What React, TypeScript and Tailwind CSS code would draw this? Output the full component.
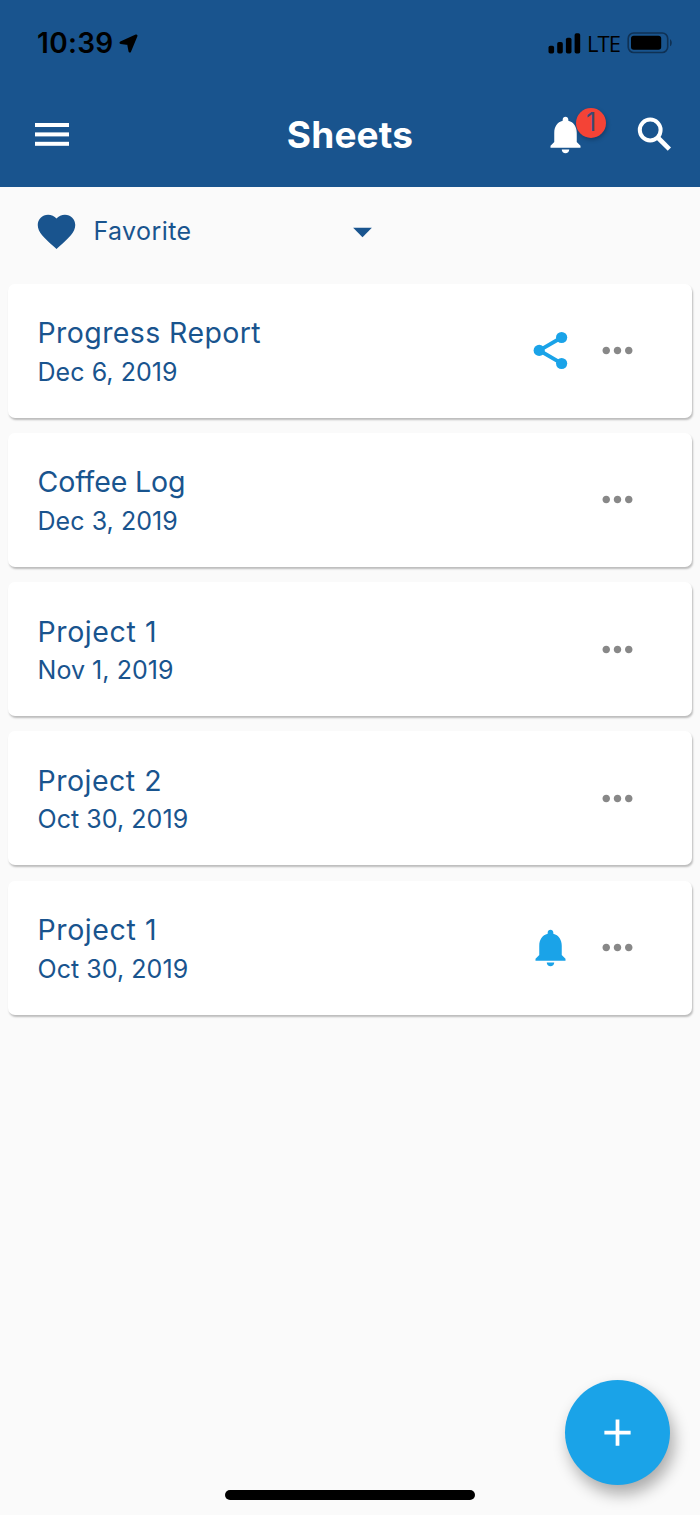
import React from "react";
import { MdAdd, MdArrowDropDown, MdFavorite, MdMoreHoriz } from "react-icons/md";

type Sheet = {
  title: string;
  date: string;
  status?: "shared" | "reminder";
  titleClass: string;
};

const sheets: Sheet[] = [
  { title: "Progress Report", date: "Dec 6, 2019", status: "shared", titleClass: "tracking-[0.4px]" },
  { title: "Coffee Log", date: "Dec 3, 2019", titleClass: "tracking-[-0.1px]" },
  { title: "Project 1", date: "Nov 1, 2019", titleClass: "tracking-[0.6px]" },
  { title: "Project 2", date: "Oct 30, 2019", titleClass: "tracking-[0.5px]" },
  { title: "Project 1", date: "Oct 30, 2019", status: "reminder", titleClass: "tracking-[0.6px]" },
];

function BellIcon({ className }: { className?: string }) {
  return (
    <svg viewBox="0 0 24 24" className={className} fill="currentColor">
      <path d="M12 22c1.1 0 2-.9 2-2h-4c0 1.1.89 2 2 2zm6-6v-5c0-3.07-1.64-5.64-4.5-6.32V4c0-.83-.67-1.5-1.5-1.5s-1.5.67-1.5 1.5v.68C7.63 5.36 6 7.92 6 11v5l-2 2v1h16v-1l-2-2z" />
    </svg>
  );
}

function ShareIcon({ className }: { className?: string }) {
  return (
    <svg viewBox="0 0 45 45" className={className} fill="currentColor">
      <path d="M33.6 9.5 11.4 22.4l22.2 13" fill="none" stroke="currentColor" strokeWidth="3.9" />
      <circle cx="11.2" cy="22.4" r="5.6" />
      <circle cx="33.6" cy="9.5" r="5.6" />
      <circle cx="33.6" cy="35.5" r="5.6" />
    </svg>
  );
}

function SearchIcon({ className }: { className?: string }) {
  return (
    <svg viewBox="0 0 45 45" className={className} fill="none" stroke="currentColor">
      <circle cx="18.2" cy="18" r="10.4" strokeWidth="4" />
      <path d="M25.7 25.5 37.4 37.2" strokeWidth="4.6" />
    </svg>
  );
}

function MenuIcon({ className }: { className?: string }) {
  return (
    <svg viewBox="0 0 34 23" className={className} fill="currentColor">
      <rect width="34" height="4" />
      <rect y="9.4" width="34" height="4" />
      <rect y="18.8" width="34" height="4" />
    </svg>
  );
}

function StatusBar() {
  return (
    <div className="flex h-[86px] items-center justify-between pl-[37px] pr-[27px] text-black">
      <div className="flex items-center">
        <span className="w-[82px] whitespace-nowrap text-[28px] font-semibold leading-none tracking-[0.3px]">10:39</span>
        <svg viewBox="0 0 19 19" className="h-[19px] w-[19px]" fill="currentColor">
          <path
            d="M1.8 8.6 17.2 1.8 10.8 17.2 9.4 9.8z"
            stroke="currentColor"
            strokeWidth="2.6"
            strokeLinejoin="round"
          />
        </svg>
      </div>
      <div className="flex items-center">
        <svg viewBox="0 0 33 21" className="mr-[6px] h-[21px] w-[33px]" fill="currentColor">
          <rect x="0.5" y="12.8" width="5.6" height="7.7" rx="1.8" />
          <rect x="9.2" y="9" width="5.6" height="11.5" rx="1.8" />
          <rect x="17.9" y="4.7" width="5.6" height="15.8" rx="1.8" />
          <rect x="26.6" y="0.3" width="5.6" height="20.2" rx="1.8" />
        </svg>
        <span className="mr-[7px] w-[33px] whitespace-nowrap pb-px font-['Open_Sans',sans-serif] text-[22px] font-medium leading-none tracking-[-0.9px]">LTE</span>
        <svg viewBox="0 0 46 22" className="h-[22px] w-[46px]">
          <rect x="1.2" y="1" width="39.5" height="19.5" rx="5.5" fill="none" stroke="#0f3154" strokeWidth="1.6" />
          <rect x="4" y="3.8" width="30.2" height="14" rx="2.8" fill="#000" />
          <path d="M43 7.2c2.4 1 2.4 6 0 7z" fill="#0f3154" />
        </svg>
      </div>
    </div>
  );
}

function Toolbar() {
  return (
    <div className="grid h-[98px] grid-cols-[1fr_auto_1fr] items-center pb-[2px] text-white">
      <MenuIcon className="ml-[35px] h-[23px] w-[34px]" />
      <h1 className="text-[37px] font-bold leading-none tracking-[0.2px]">Sheets</h1>
      <div className="flex items-center justify-end pr-[23px]">
        <div className="relative mr-[44px]">
          <BellIcon className="size-[45px]" />
          <span className="absolute left-[33px] top-[-4px] flex size-[30px] items-center justify-center rounded-full bg-[#f44336] text-[25px] leading-none text-[#3c4a75] shadow-[1px_2px_4px_rgba(0,0,0,0.25)]">
            1
          </span>
        </div>
        <SearchIcon className="size-[45px]" />
      </div>
    </div>
  );
}

function FilterBar() {
  return (
    <div className="flex h-[97px] items-start pl-[33.5px] pt-[22px] text-[#19548e]">
      <MdFavorite className="size-[45px]" />
      <div className="ml-[15px] flex h-[45px] w-[291px] items-center justify-between">
        <span className="text-[25px] leading-none tracking-[0.4px]">Favorite</span>
        <MdArrowDropDown className="size-[45px]" />
      </div>
    </div>
  );
}

function SheetCard({ sheet }: { sheet: Sheet }) {
  return (
    <li className="flex h-[134px] items-center rounded-[7px] bg-white pl-[29.5px] pr-[52px] shadow-[1px_2px_2px_rgba(0,0,0,0.25)]">
      <div className="flex-1 pt-[4px] text-[#19548e]">
        <div className={`text-[28.5px] leading-[38.5px] ${sheet.titleClass}`}>{sheet.title}</div>
        <div className="text-[25px] leading-[38.5px] tracking-[0.05px]">{sheet.date}</div>
      </div>
      <div className="mr-[22px] size-[45px] text-[#1aa3e8]">
        {sheet.status === "shared" && <ShareIcon className="size-[45px]" />}
        {sheet.status === "reminder" && <BellIcon className="size-[45px]" />}
      </div>
      <MdMoreHoriz className="size-[45px] text-[#888]" />
    </li>
  );
}

export default function App() {
  return (
    <div className="relative flex h-[1515px] w-[700px] flex-col overflow-hidden bg-[#fafafa] font-['Inter',sans-serif]">
      <header className="h-[186.5px] shrink-0 bg-[#19548e]">
        <StatusBar />
        <Toolbar />
      </header>
      <FilterBar />
      <ul className="flex flex-col gap-[15.25px] px-2">
        {sheets.map((sheet, i) => (
          <SheetCard key={i} sheet={sheet} />
        ))}
      </ul>
      <button className="absolute bottom-[30px] right-[30px] flex size-[105px] items-center justify-center rounded-full bg-[#1aa3e8] text-white shadow-[4px_9px_16px_rgba(0,0,0,0.32)]">
        <MdAdd className="size-[45px]" />
      </button>
      <div className="absolute bottom-[15px] left-[225px] h-[10px] w-[250px] rounded-full bg-black" />
    </div>
  );
}
